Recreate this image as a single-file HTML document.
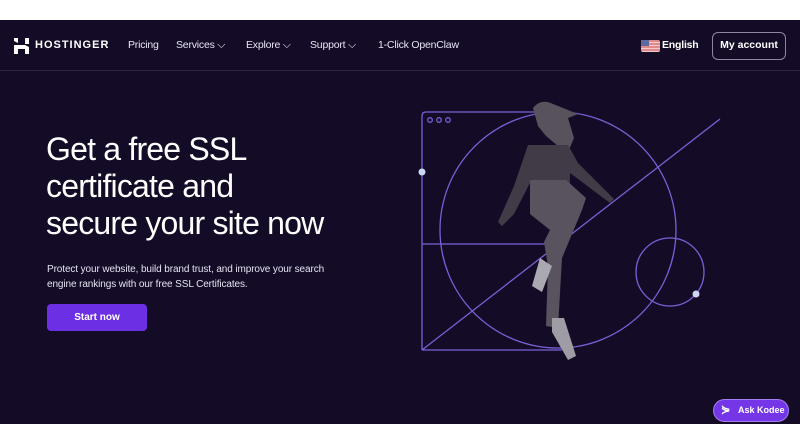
<!DOCTYPE html>
<html><head><meta charset="utf-8"><style>
*{margin:0;padding:0;box-sizing:border-box}
body{width:800px;height:445px;background:#fff;font-family:"Liberation Sans",sans-serif;position:relative;overflow:hidden}
.hero{position:absolute;left:0;top:20px;width:800px;height:404px;background:#140c26}
.nav{position:absolute;left:0;top:0;width:800px;height:51px;border-bottom:1px solid #2a2340}
.nav span{position:absolute;top:19px;color:#e8e4f5;font-size:10.5px;letter-spacing:-0.2px}
.logo{position:absolute;left:35px;top:19px;color:#fff;font-weight:bold;font-size:11px;letter-spacing:1px}
.acc{position:absolute;left:712px;top:12px;width:74px;height:28px;border:1.5px solid #8c88a0;border-radius:6px;color:#fff;font-weight:bold;font-size:10.5px;text-align:center;line-height:25px}
h1{position:absolute;left:46px;top:111px;color:#fff;font-weight:normal;font-size:32px;line-height:37px;letter-spacing:-0.8px}
p{position:absolute;left:47px;top:242px;color:#e6e2f2;font-size:10px;line-height:15px;letter-spacing:-0.1px}
.btn{position:absolute;left:47px;top:284px;width:100px;height:27px;background:#6d2fe3;border-radius:4px;color:#fff;font-weight:bold;font-size:10px;text-align:center;line-height:27px}
.ask{position:absolute;left:713px;top:379px;width:76px;height:23px;background:#7436e6;border:1.5px solid #a27ff0;border-radius:12px;color:#fff;font-weight:bold;font-size:9px;line-height:20px;padding-left:24px}
</style></head><body>
<div class="hero">
 <div class="nav">
  <svg style="position:absolute;left:14px;top:18px" width="15" height="16" viewBox="0 0 15 16"><path d="M0 0h4v5l-4-2zM0 7h11l4 2v7h-4v-5H4v5H0zM11 0h4v6h-4zM0 13" fill="#fff"/><path d="M11 0l4 2v4l-4-2z" fill="#fff"/></svg>
  <div class="logo">HOSTINGER</div>
  <span style="left:128px">Pricing</span>
  <span style="left:176px">Services ⌵</span>
  <span style="left:246px">Explore ⌵</span>
  <span style="left:310px">Support ⌵</span>
  <span style="left:378px">1-Click OpenClaw</span>
  <div style="position:absolute;left:641px;top:20px;width:19px;height:12px;background:repeating-linear-gradient(#e08a8a 0 2px,#f0caca 2px 3px);border-radius:2px"><div style="width:8px;height:6px;background:#5c6a9e"></div></div>
  <span style="left:662px;font-weight:bold;color:#fff">English</span>
  <div class="acc">My account</div>
 </div>
 <h1>Get a free SSL<br>certificate and<br>secure your site now</h1>
 <p>Protect your website, build brand trust, and improve your search<br>engine rankings with our free SSL Certificates.</p>
 <div class="btn">Start now</div>
 <svg style="position:absolute;left:0;top:-20px" width="800" height="445">
  <g fill="none" stroke="#7a5fd6" stroke-width="1.3">
   <path d="M422 350V116q0-4 4-4h130"/>
   <circle cx="558" cy="230" r="118"/>
   <path d="M422 244h124M422 350h140M422 350L720 119"/>
   <circle cx="670" cy="272" r="34"/>
   <circle cx="430" cy="120" r="2.3"/><circle cx="439" cy="120" r="2.3"/><circle cx="448" cy="120" r="2.3"/>
  </g>
  <circle cx="422" cy="172" r="3.5" fill="#cdd6f4"/>
  <circle cx="696" cy="294" r="3.5" fill="#cdd6f4"/>
  <g>
   <path d="M533 108q8-10 20-4l25 10-10 4 6 20-6 14-10-6-12-10-8-10z" fill="#57525c"/>
   <path d="M528 145l40 0 10 18 36 36-4 4-40-30 0 34-36 2-2-30-18 35-12 12-4-4 16-36z" fill="#403b46"/>
   <path d="M530 180l36 0 20 18-4 12-20 48-4 70-12-2 2-60-4-24 6-12-20-16z" fill="#58535e"/>
   <path d="M540 258l12 8-10 26-10-6z" fill="#aaa8b0"/>
   <path d="M552 318l12 0 12 38-8 4-16-28z" fill="#9e9ca4"/>
  </g>
 </svg>
 <div class="ask"><span style="position:absolute;left:7px;top:0;font-size:11px">⋟</span>Ask Kodee</div>
</div>
</body></html>
